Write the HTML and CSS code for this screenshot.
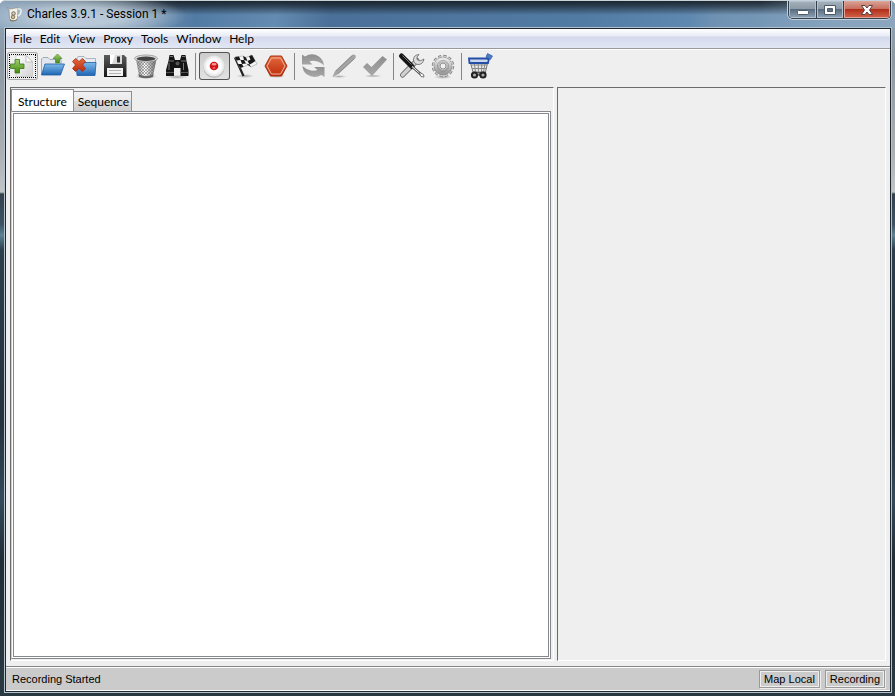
FILE: index.html
```html
<!DOCTYPE html>
<html lang="en">
<head>
<meta charset="utf-8">
<title>Charles 3.9.1 - Session 1 *</title>
<link rel="stylesheet" href="styles.css">
</head>
<body>
<svg class="defs" aria-hidden="true">
  <defs>
    <linearGradient id="blue" x1="0" y1="0" x2="0" y2="1"><stop offset="0" stop-color="#7db9ea"/><stop offset="1" stop-color="#1f66b4"/></linearGradient>
    <linearGradient id="green" x1="0" y1="0" x2="0" y2="1"><stop offset="0" stop-color="#a3cf6b"/><stop offset="1" stop-color="#3f8a12"/></linearGradient>
    <linearGradient id="paper" x1="0" y1="0" x2="1" y2="1"><stop offset="0" stop-color="#ffffff"/><stop offset="1" stop-color="#d2d2d2"/></linearGradient>
    <linearGradient id="metal" x1="0" y1="0" x2="1" y2="0"><stop offset="0" stop-color="#8a8a8a"/><stop offset=".45" stop-color="#ffffff"/><stop offset="1" stop-color="#686868"/></linearGradient>
    <linearGradient id="dark" x1="0" y1="0" x2="0" y2="1"><stop offset="0" stop-color="#5c5c5c"/><stop offset="1" stop-color="#151515"/></linearGradient>
    <linearGradient id="red" x1="0" y1="0" x2="0" y2="1"><stop offset="0" stop-color="#e4693c"/><stop offset="1" stop-color="#bd2d0c"/></linearGradient>
    <linearGradient id="gray" x1="0" y1="0" x2="0" y2="1"><stop offset="0" stop-color="#8e8e8e"/><stop offset="1" stop-color="#a8a8a8"/></linearGradient>
    <linearGradient id="steel" x1="0" y1="0" x2="0" y2="1"><stop offset="0" stop-color="#e6e6e6"/><stop offset="1" stop-color="#9c9c9c"/></linearGradient>
    <radialGradient id="disc"><stop offset=".6" stop-color="#ffffff"/><stop offset="1" stop-color="#e2e2e2"/></radialGradient>
    <radialGradient id="shadow"><stop offset="0" stop-color="#000" stop-opacity=".3"/><stop offset="1" stop-color="#000" stop-opacity="0"/></radialGradient>
    <pattern id="mesh" width="3" height="3" patternUnits="userSpaceOnUse"><path d="M0 0L3 3M3 0L0 3" stroke="#666" stroke-width=".5"/></pattern>
  </defs>
</svg>
<div class="window">
  <header class="titlebar">
    <svg class="app-icon" viewBox="0 0 16 16" aria-hidden="true">
      <path d="M1 1.500L4 3L12 1.500L11.500 13Q7 16.500 3.500 13L3 4Z" fill="#f3f1e8" stroke="#8d8c83" stroke-width=".7"/>
      <path d="M12 3Q16 2.500 15 6Q14.500 9 11.800 10" fill="none" stroke="#e9eef0" stroke-width="1.600"/>
      <path d="M4 13Q7.500 16 11 13V14Q7.500 16.500 4 14.500Z" fill="#7c6c4c"/>
      <circle cx="7.500" cy="7.500" r="1.800" fill="#d9cdb6" stroke="#5e594e" stroke-width=".8"/><circle cx="7" cy="11" r="1.800" fill="#cbbb98" stroke="#6e6249" stroke-width=".8"/>
    </svg>
    <h1 class="title">Charles 3.9.1 - Session 1 *</h1>
    <div class="caption-buttons">
      <button class="caption minimize" type="button" aria-label="Minimize"><svg viewBox="0 0 14 12"><rect x="1.500" y="6.500" width="11" height="4" rx="1" fill="#fff" stroke="#4e5a68"/></svg></button>
      <button class="caption maximize" type="button" aria-label="Maximize"><svg viewBox="0 0 14 12"><path fill-rule="evenodd" d="M1.500 1.500H12.500V10.500H1.500ZM4.500 4.500V7.500H9.500V4.500Z" fill="#fff" stroke="#4e5a68"/></svg></button>
      <button class="caption close" type="button" aria-label="Close"><svg viewBox="0 0 14 12"><path d="M1.500 1.500H5L7 4L9 1.500H12.500L9.500 6L12.500 10.500H9L7 8L5 10.500H1.500L4.500 6Z" fill="#fff" stroke="#5d4046"/></svg></button>
    </div>
  </header>
  <main class="client">
    <nav class="menubar" aria-label="Main menu">
      <button type="button">File</button>
      <button type="button">Edit</button>
      <button type="button">View</button>
      <button type="button">Proxy</button>
      <button type="button">Tools</button>
      <button type="button">Window</button>
      <button type="button">Help</button>
    </nav>
    <div class="toolbar" role="toolbar" aria-label="Session tools">
      <button class="tool focused" type="button" aria-label="New session"><svg viewBox="0 0 31 28">
        <path d="M9 3.500H19L25.500 10V24.500H9Z" fill="url(#paper)" stroke="#c4c4c4" stroke-width=".7"/><path d="M19 3.500V10H25.500Z" fill="#fff" stroke="#aaa" stroke-width=".7"/>
        <path d="M8 7.500H12.500V12H17V16.500H12.500V21H8V16.500H3.500V12H8Z" fill="url(#green)" stroke="#3a7718" stroke-width=".8"/>
      </svg></button>
      <button class="tool" type="button" aria-label="Open session"><svg viewBox="0 0 31 28">
        <path d="M3.500 22V7L5 5.500H10L12 7.500H23V12L20 22Z" fill="#e0e6ec" stroke="#8b9bad" stroke-width=".8"/>
        <path d="M3.500 23L7 12H26.500L22.500 23Z" fill="url(#blue)" stroke="#1c5da4" stroke-width=".8"/>
        <path d="M19.500 2L24 6.500H21.500V11H17.500V6.500H15Z" fill="url(#green)" stroke="#4d8a28" stroke-width=".7"/>
      </svg></button>
      <button class="tool" type="button" aria-label="Close session"><svg viewBox="0 0 31 28">
        <path d="M8 10V6L9 4.500H15L17 6.500H26.500V12H8Z" fill="#e7ebef" stroke="#98a7b8" stroke-width=".8"/>
        <path d="M7 10.500H27L26 23.500H8Z" fill="url(#blue)" stroke="#1c5da4" stroke-width=".8"/>
        <path d="M6.500 6.500L10 9.500L13.500 6.500L16.500 9.500L13.500 13L16.500 16.500L13.500 19.500L10 16.500L6.500 19.500L3.500 16.500L6.500 13L3.500 9.500Z" fill="url(#red)" stroke="#a12f14" stroke-width=".8"/>
      </svg></button>
      <button class="tool" type="button" aria-label="Save session"><svg viewBox="0 0 31 28">
        <path d="M4 3H24L26.500 5.500V25H4Z" fill="url(#dark)"/>
        <rect x="10" y="3" width="12" height="9" fill="#d9d9d9"/><path d="M10 3H15L12 12H10Z" fill="#fff"/><rect x="17" y="4.500" width="3" height="6" fill="#333"/>
        <rect x="7" y="16" width="16" height="8" fill="#f3f3f3"/><path d="M9 18.500H21M9 21.500H21" stroke="#b4b4b4"/>
      </svg></button>
      <button class="tool" type="button" aria-label="Clear session"><svg viewBox="0 0 31 28">
        <ellipse cx="15" cy="24.500" rx="11" ry="2.500" fill="url(#shadow)"/>
        <path d="M5 7L8 24Q15 27 22 24L25.500 7Z" fill="url(#metal)"/><path d="M6 10L8 22Q15 25 22 22L24.500 10Z" fill="url(#mesh)"/>
        <path d="M7.500 22Q15 26 22.500 22L22 25Q15 27.500 8 25Z" fill="#666"/>
        <ellipse cx="15" cy="6.500" rx="11.500" ry="3.500" fill="#dedede" stroke="#777" stroke-width=".6"/><ellipse cx="15" cy="6.700" rx="9.500" ry="2.200" fill="#444"/>
      </svg></button>
      <button class="tool" type="button" aria-label="Find"><svg viewBox="0 0 31 28">
        <ellipse cx="15" cy="25" rx="12" ry="2" fill="url(#shadow)"/>
        <path d="M6.500 9L7.500 3H11.500L13 8H18L19.500 3H23.500L24.500 9L26.500 18V24H18.500V16H12V24H4V18Z" fill="#151515"/>
        <path d="M8 4.500H11M20 4.500H23M7 9H12M19 9H24" stroke="#777"/><path d="M7 11V18M21.500 11V18" stroke="#777"/>
        <path d="M4 20.500H12M18.500 20.500H26.500" stroke="#555"/><circle cx="15.500" cy="11.500" r="2" fill="#555"/>
      </svg></button>
      <span class="separator"></span>
      <button class="tool pressed" type="button" aria-label="Stop recording" aria-pressed="true"><svg viewBox="0 0 31 28">
        <circle cx="15" cy="15.500" r="10.500" fill="#bbb"/><circle cx="15" cy="14" r="10.500" fill="url(#disc)"/>
        <circle cx="15" cy="14" r="4.300" fill="#d41318"/><ellipse cx="15" cy="12.300" rx="2.500" ry="1.300" fill="#f39b93"/><ellipse cx="15" cy="16" rx="1.500" ry="1" fill="#ef645d"/>
      </svg></button>
      <button class="tool" type="button" aria-label="Throttle"><svg viewBox="0 0 31 28">
        <ellipse cx="15" cy="24" rx="9" ry="2" fill="url(#shadow)"/>
        <path d="M5 5.500L13.500 24" stroke="#222" stroke-width="2.200"/>
        <path d="M5 5L13 4L16 5.500L22 3L27 12L21 15L18 13L10 16Z" fill="#f5f5f5" stroke="#777" stroke-width=".4"/>
        <path d="M5 5L9 4.500L10.500 8L6.500 8.500ZM13 4L16 5.500L17.500 9L14 8ZM19 4.300L22 3L23.700 6L20.500 7.500ZM10.500 8L14 8L16 11.500L12 12ZM17.500 9L20.500 7.500L22.500 11L19.500 12.500ZM8 12L12 12L13.500 14.700L10 16ZM16 11.500L19.500 12.500L21 15L18 13ZM23.700 6L25.300 9L22.500 11L20.500 7.500Z" fill="#181818"/>
      </svg></button>
      <button class="tool" type="button" aria-label="Breakpoints"><svg viewBox="0 0 31 28">
        <ellipse cx="15.500" cy="24" rx="9" ry="2" fill="url(#shadow)"/>
        <path d="M9.500 4H20.500L26 14L20.500 24H9.500L4 14Z" fill="url(#red)" stroke="#a83212"/>
        <path d="M10.500 6H19.500L24 14L19.500 22H10.500L6 14Z" fill="none" stroke="#f4b49d"/>
      </svg></button>
      <span class="separator"></span>
      <button class="tool" type="button" aria-label="Repeat" disabled><svg viewBox="0 0 31 28">
        <path d="M4 2.500L7 4.500Q14 0 21 4.500Q25.500 8 26 13.500Q22 9.500 17 9Q14 8.500 11.500 9.500L14.500 12.500H4Z" fill="url(#gray)"/>
        <path d="M26.500 25L23.500 23Q16 27 9 22.500Q4.500 19 4.500 14Q8 17.500 13 18.500Q17 19 19.500 18L16 15H26.500Z" fill="url(#gray)"/>
      </svg></button>
      <button class="tool" type="button" aria-label="Edit request" disabled><svg viewBox="0 0 31 28">
        <ellipse cx="10" cy="24.500" rx="8" ry="1.500" fill="url(#shadow)"/>
        <path d="M3.500 25L6 19L22.500 3.500Q25 1.500 26.500 3.500Q27.500 5 26 6.500L9.500 22Z" fill="#a5a5a5"/><path d="M7 19L23.500 3.500M9 21.500L25.500 6.500" stroke="#868686" stroke-width=".8"/>
      </svg></button>
      <button class="tool" type="button" aria-label="Validate" disabled><svg viewBox="0 0 31 28">
        <ellipse cx="13" cy="24" rx="9" ry="1.500" fill="url(#shadow)"/>
        <path d="M3 15L7 11L11.500 15L22.500 4L27 7.500L12 24Z" fill="url(#gray)"/>
      </svg></button>
      <span class="separator"></span>
      <button class="tool" type="button" aria-label="Tools"><svg viewBox="0 0 31 28">
        <path d="M5.500 23L20 8.500" stroke="#555" stroke-width="5" stroke-linecap="round"/><path d="M5.500 23L20 8.500" stroke="#d0d0d0" stroke-width="3.600" stroke-linecap="round"/>
        <path d="M22 2.500Q17 3 16.500 7Q16.500 12 21 12.500Q26 12.500 27 7L23 9L20 7.500L20 5Z" fill="#dedede" stroke="#666" stroke-width=".8"/>
        <path d="M4.500 4L15 14.500" stroke="#151515" stroke-width="5" stroke-linecap="round"/><path d="M5.500 3.500L14.500 12.500" stroke="#777"/>
        <path d="M15 14.500L24 22.500" stroke="#555" stroke-width="2.500"/><path d="M15 14.500L24 22.500" stroke="#eee"/><path d="M22 20L26.500 22.500L27 25L24 24.500Z" fill="#fff" stroke="#555" stroke-width=".8"/>
      </svg></button>
      <button class="tool" type="button" aria-label="Settings"><svg viewBox="0 0 31 28">
        <ellipse cx="15" cy="25" rx="9" ry="2" fill="url(#shadow)"/>
        <circle cx="15" cy="14" r="9.700" fill="none" stroke="#777" stroke-width="3" stroke-dasharray="3.080 2"/>
        <circle cx="15" cy="14" r="9.300" fill="none" stroke="#c8c8c8" stroke-width="2.400" stroke-dasharray="2.870 2"/>
        <circle cx="15" cy="14" r="6.500" fill="none" stroke="#888" stroke-width="5.500"/><circle cx="15" cy="14" r="6.500" fill="none" stroke="url(#steel)" stroke-width="4.500"/>
        <circle cx="15" cy="14" r="5.500" fill="none" stroke="#8d8d8d" stroke-width=".7"/><circle cx="15" cy="14" r="3" fill="#efefef" stroke="#777" stroke-width=".8"/>
      </svg></button>
      <span class="separator"></span>
      <button class="tool" type="button" aria-label="Buy"><svg viewBox="0 0 31 28">
        <path d="M5 9H23L20.500 20H8Z" fill="#e8e8e8" stroke="#777"/><path d="M9 9L10.500 20M13 9L13.500 20M17 9L16.500 20M20.500 9L18.500 20M6 13H22M7 16.500H21" stroke="#888"/>
        <path d="M4 6.500H24L23 11H4.500Z" fill="#cbd7ef" stroke="#234fa7" stroke-width="1.800"/>
        <path d="M23 8L24 4.500L22 3" fill="none" stroke="#234fa7" stroke-width="1.500"/><path d="M22.500 1.500L27.500 4L25.500 7.500L21 5Z" fill="#4d7cc4" stroke="#234fa7" stroke-width=".6"/>
        <path d="M8 20.500H21" stroke="#555"/>
        <circle cx="9.500" cy="23" r="2.600" fill="#aaa" stroke="#222" stroke-width="2"/><circle cx="14.500" cy="22.500" r="1.500" fill="#555"/><circle cx="18" cy="23" r="2.600" fill="#aaa" stroke="#222" stroke-width="2"/>
      </svg></button>
    </div>
    <div class="workspace">
      <section class="pane navigator">
        <div class="tabs" role="tablist">
          <button class="tab selected" type="button" role="tab" aria-selected="true">Structure</button>
          <button class="tab" type="button" role="tab" aria-selected="false">Sequence</button>
        </div>
        <div class="tab-panel" role="tabpanel" aria-label="Structure"><div class="tree"></div></div>
      </section>
      <section class="pane details" aria-label="Details"></section>
    </div>
    <footer class="statusbar">
      <span class="message">Recording Started</span>
      <button class="indicator" type="button">Map Local</button>
      <button class="indicator" type="button">Recording</button>
    </footer>
  </main>
</div>
</body>
</html>
```

FILE: styles.css
```css
* { box-sizing: border-box; }

body {
  margin: 0;
  font-family: Lato, sans-serif;
  font-size: 12px;
  color: #000;
}

button {
  margin: 0;
  padding: 0;
  border: 0;
  background: none;
  font: inherit;
  color: inherit;
}

svg { display: block; }

.defs { position: absolute; width: 0; height: 0; }

.window {
  display: flex;
  flex-direction: column;
  height: 100vh;
  padding: 0 4px 4px 5px;
  border-radius: 6px 6px 0 0;
  background: linear-gradient(#8fa6ba 0, #8d98a2 60px, #aaaeb1 150px, #c2c4c6 192px, #33414c 194px, #3d5464 225px, #5b8393 235px, #2c3e4a 250px, #25313b 420px, #33495a 500px, #222c34 560px, #2a3942 100%);
}

.titlebar {
  display: flex;
  align-items: flex-start;
  flex: none;
  height: 28px;
  margin: 0 -4px 0 -5px;
  padding-left: 6px;
  border-top: 1px solid #c9d3d6;
  border-radius: 6px 6px 0 0;
  background:
    radial-gradient(ellipse 105px 22px at 82px 15px, rgba(205, 217, 228, .7) 40%, rgba(205, 217, 228, 0) 100%),
    linear-gradient(90deg, #8ba5bd 0, rgba(139, 165, 189, 0) 20%, rgba(139, 165, 189, 0) 85%, rgba(139, 165, 189, .9) 100%),
    linear-gradient(rgba(20, 28, 35, .9) 0, rgba(20, 28, 35, .65) 5px, rgba(20, 28, 35, 0) 14px),
    linear-gradient(100deg, #8ba5bd 0, #7895b2 15%, #527ba4 22%, #648bb1 31%, #4a7099 37%, #527ba3 65%, #5f88b0 77%, #6f92b3 80%, #88a6c1 100%);
}

.app-icon { width: 16px; height: 16px; margin-top: 5px; }

.title {
  flex: 1;
  margin: 3px 0 0 5px;
  font: 12px/20px Roboto, sans-serif;
}

.caption-buttons {
  display: flex;
  height: 18px;
  margin-right: 4px;
  border: 1px solid #34404c;
  border-top: 0;
  border-radius: 0 0 5px 5px;
  box-shadow: 0 0 0 1px #c2d1dd;
  overflow: hidden;
}

.caption {
  display: flex;
  justify-content: center;
  align-items: center;
  width: 27px;
  background: linear-gradient(#a6b2bb, #8d9ba8 45%, #5a6d80 50%, #8da4b8);
  box-shadow: inset 0 0 0 1px #b3c1cc;
}

.caption + .caption { border-left: 1px solid #34404c; }
.caption.close { width: 47px; background: linear-gradient(#d9a397, #c8705f 45%, #b1301a 50%, #d3654c); box-shadow: inset 0 0 0 1px #e0a396; }
.caption svg { width: 14px; height: 12px; }

.client {
  display: flex;
  flex-direction: column;
  flex: 1;
  min-height: 0;
  border: 1px solid #1c2730;
  background: #efefef;
  box-shadow: 0 0 0 1px #b3c2ce;
}

.menubar {
  display: flex;
  flex: none;
  height: 20px;
  padding-left: 7px;
  gap: 8px;
  border-bottom: 1px solid #999;
  background: linear-gradient(#fff 0, #e8ebf6 7px, #d4daec 8px, #e2e7f5 100%);
}

.menubar button { line-height: 19px; }

.toolbar {
  display: flex;
  flex: none;
  padding: 2px 1px 7px;
  border-top: 1px solid #fff;
}

.tool { width: 31px; height: 28px; }
.tool svg { width: 31px; height: 28px; }

.focused {
  position: relative;
  border-radius: 3px;
  box-shadow: inset 0 0 0 1px #aaa;
}

.focused::after {
  content: "";
  position: absolute;
  inset: 2px;
  border: 1px dotted #000;
}

.pressed {
  border-radius: 3px;
  background: linear-gradient(#ccc, #e3e3e3);
  box-shadow: inset 0 0 0 1px #555;
}

.separator {
  width: 1px;
  height: 27px;
  margin: 1px 3px 0 2px;
  background: #858585;
}

.workspace {
  display: grid;
  grid-template-columns: 544fr 329fr;
  gap: 3px;
  flex: 1;
  min-height: 0;
  padding: 0 4px 5px;
}

.pane {
  border: 1px solid #fff;
  border-top-color: #6b6b6b;
  border-left-color: #6b6b6b;
}

.navigator {
  display: flex;
  flex-direction: column;
  padding: 1px 2px 1px 0;
}

.tabs { display: flex; align-items: flex-end; flex: none; }

.tab {
  height: 20px;
  padding: 0 2px 0 4px;
  border: 1px solid #8b8f94;
  border-width: 1px 1px 0 0;
  background: linear-gradient(#f2f2f2, #e9e9e9 45%, #dadada 50%, #cfcfcf);
  line-height: 20px;
}

.tab.selected {
  height: 22px;
  padding: 0 6px;
  border-left-width: 1px;
  background: #fff;
  line-height: 24px;
}

.tab-panel {
  display: flex;
  flex: 1;
  padding: 1px;
  border: 1px solid #85888c;
  border-left-color: #ccc;
  background: #fff;
}

.tree { flex: 1; border: 1px solid #85888c; background: #fff; }

.statusbar {
  display: flex;
  align-items: center;
  gap: 5px;
  flex: none;
  height: 25px;
  padding: 0 5px 0 6px;
  border-top: 1px solid #858585;
  border-bottom: 1px solid #fff;
  background: #cbcbcb;
  box-shadow: inset 0 1px #fff;
  font: 11px/16px "Liberation Sans", sans-serif;
}

.message { flex: 1; }

.indicator {
  height: 18px;
  padding: 0 4px;
  border: 1px solid #999;
  box-shadow: inset 0 0 0 1px #eee, 1px 1px #eee;
}
```
